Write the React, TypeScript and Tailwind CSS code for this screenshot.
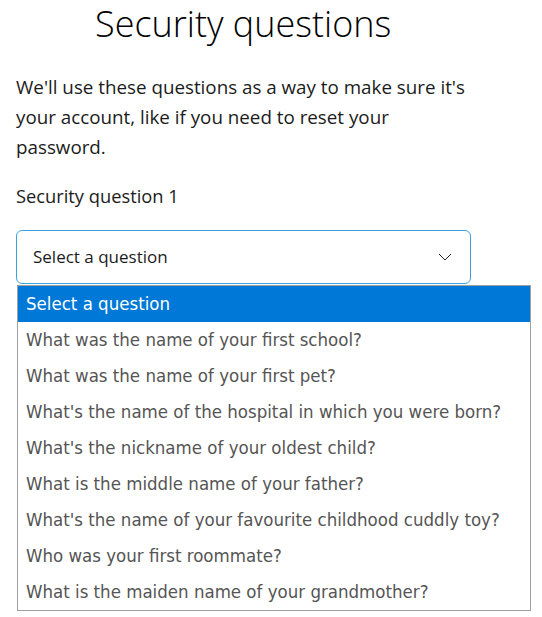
import React from "react";

const options = [
  "What was the name of your first school?",
  "What was the name of your first pet?",
  "What's the name of the hospital in which you were born?",
  "What's the nickname of your oldest child?",
  "What is the middle name of your father?",
  "What's the name of your favourite childhood cuddly toy?",
  "Who was your first roommate?",
  "What is the maiden name of your grandmother?",
];

export default function App() {
  return (
    <div className="w-[542px] h-[617px] bg-white overflow-hidden relative" style={{ fontFamily: '"Open Sans", "Noto Sans", sans-serif' }}>
      <h1 className="pl-[95px] pt-[2px] text-[36px] leading-[44px] font-light text-black">Security questions</h1>
      <p className="mt-[26px] pl-4 w-[478px] text-[18.8px] leading-[30px] text-[#1b1b1b]">
        We'll use these questions as a way to make sure it's your account, like if you need to reset your password.
      </p>
      <div className="mt-[22px] pl-4 text-[18.3px] leading-[24px] text-[#1b1b1b]">Security question 1</div>
      <div className="relative mt-[22px] ml-4 w-[455px]">
        <div className="h-[54px] border border-[#3aa2de] rounded-[6px] flex items-center justify-between pl-4 pr-4">
          <span className="text-[17px] text-[#1b1b1b]">Select a question</span>
          <svg width="14" height="8" viewBox="0 0 14 8" className="mr-[2px]">
            <path d="M1 1 L7 7 L13 1" fill="none" stroke="#222" strokeWidth="1" />
          </svg>
        </div>
        <div
          className="absolute left-[1px] top-[55px] w-[514px] border border-[#a0a0a0] bg-white"
          style={{ fontFamily: '"DejaVu Sans Condensed", "DejaVu Sans", sans-serif' }}
        >
          <div className="h-[36px] flex items-center pl-2 bg-[#0078d7] text-white text-[18.5px]">Select a question</div>
          {options.map((o) => (
            <div key={o} className="h-[36px] flex items-center pl-2 text-[#555] text-[18.5px]">
              {o}
            </div>
          ))}
        </div>
      </div>
    </div>
  );
}
